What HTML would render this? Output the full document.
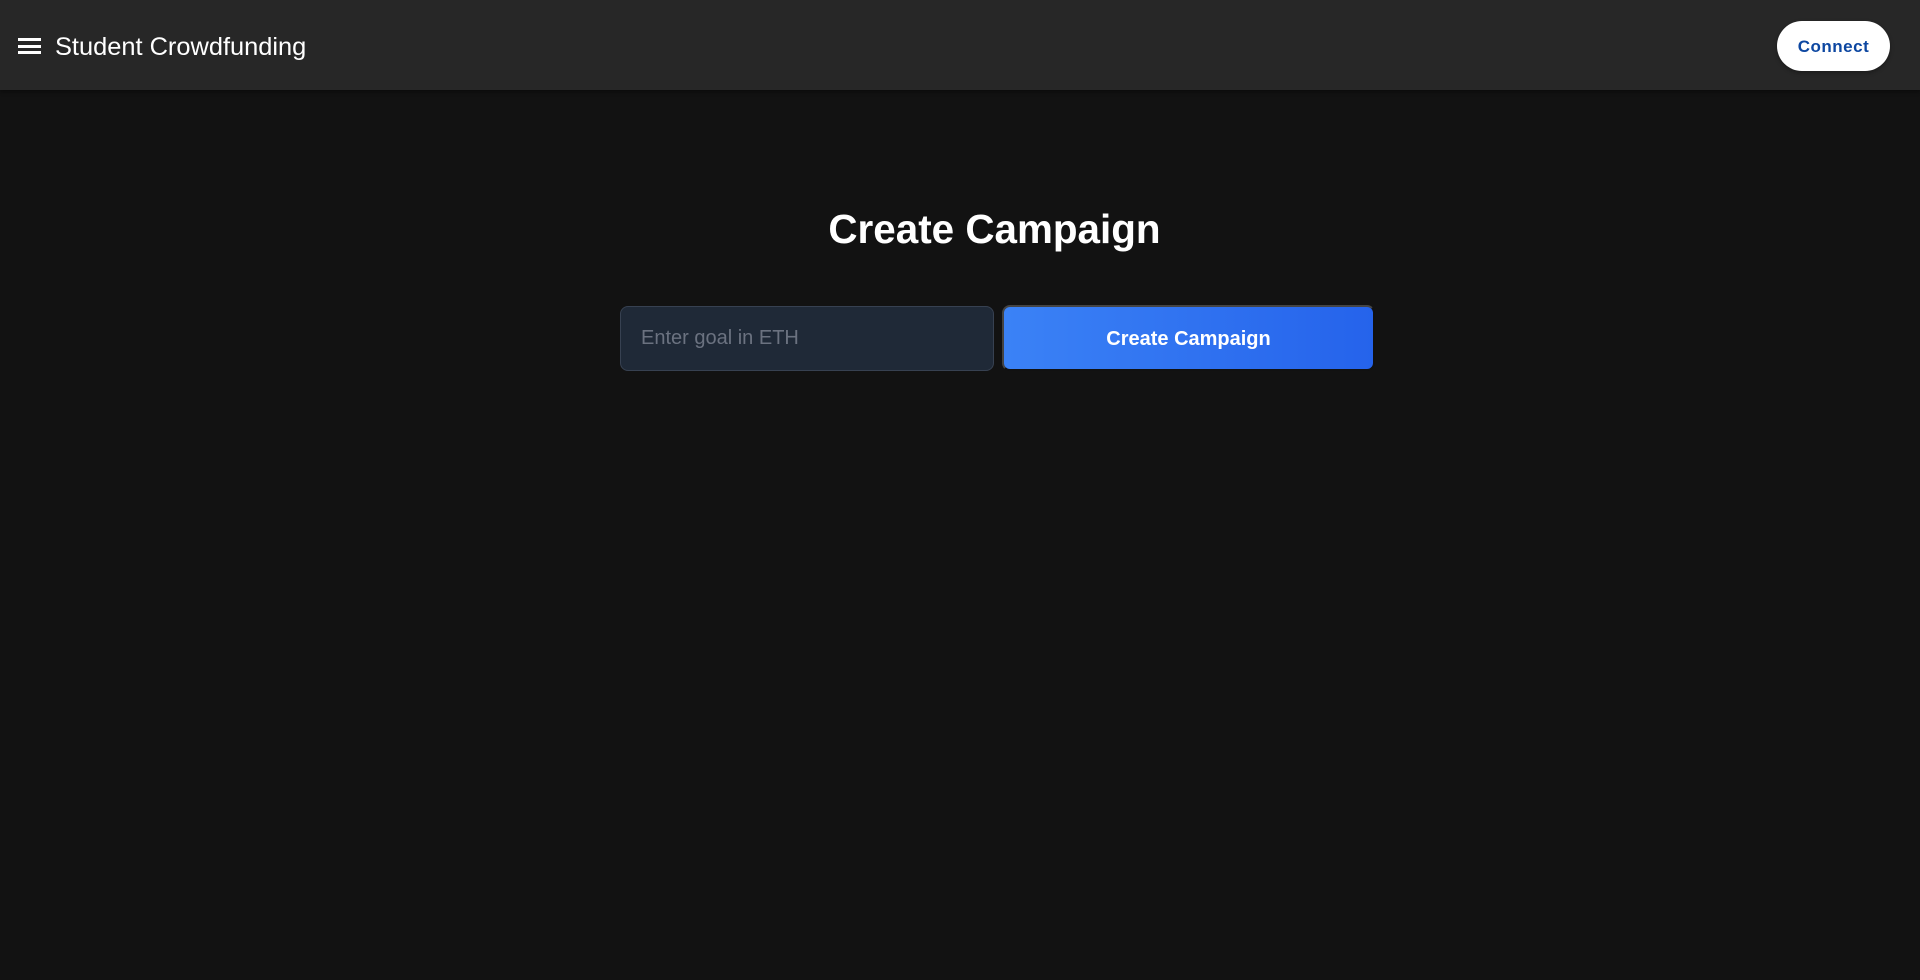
<!DOCTYPE html>
<html><head><meta charset="utf-8"><style>
*{margin:0;padding:0;box-sizing:border-box}
body{width:1920px;height:980px;background:#121212;font-family:"Liberation Sans",Arial,sans-serif;position:relative;overflow:hidden}
.hdr{position:absolute;left:0;top:0;width:1920px;height:90px;background:#272727;box-shadow:0 2px 4px rgba(0,0,0,.4)}
.ham{position:absolute;left:18px;top:38px;width:23px;height:16px}
.ham i{display:block;height:3px;background:#fff;margin-bottom:3.5px}
.title{position:absolute;left:55px;top:32px;font-size:25.4px;color:#fff;line-height:30px}
.conn{position:absolute;left:1777px;top:21px;width:113px;height:50px;border-radius:25px;background:#fff;color:#0d47a1;font-weight:bold;font-size:17px;letter-spacing:.5px;text-align:center;line-height:51px;box-shadow:0 2px 4px rgba(0,0,0,.3)}
h1{position:absolute;left:0;width:1989px;text-align:center;top:205px;font-size:40.4px;color:#fff;line-height:48px}
.inp{position:absolute;left:620px;top:306px;width:374px;height:65px;background:#1f2937;border:1px solid #374151;border-radius:8px;color:#6b7280;font-size:20px;line-height:63px;padding-left:20px}
.btn{position:absolute;left:1002px;top:305px;width:373px;height:66px;border-radius:8px;background:linear-gradient(90deg,#3b82f6,#2563eb);border:2px solid #444;border-right-color:#111;border-bottom-color:#111;color:#fff;font-weight:bold;font-size:20px;text-align:center;line-height:64px}
</style></head><body>
<div class="hdr"><div class="ham"><i></i><i></i><i></i></div><div class="title">Student Crowdfunding</div><div class="conn">Connect</div></div>
<h1>Create Campaign</h1>
<div class="inp">Enter goal in ETH</div>
<div class="btn">Create Campaign</div>
</body></html>
